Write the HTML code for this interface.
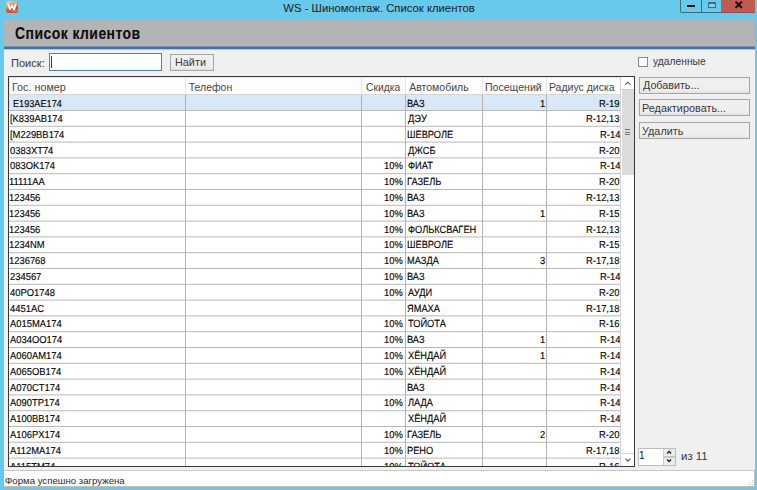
<!DOCTYPE html>
<html><head><meta charset="utf-8"><style>
html,body{margin:0;padding:0;}
body{width:757px;height:490px;overflow:hidden;position:relative;background:#68caea;font-family:"Liberation Sans", sans-serif;}
.b{position:absolute;}
.t{position:absolute;white-space:nowrap;font-family:"Liberation Sans", sans-serif;}
</style></head><body>
<div class="b" style="left:5.6px;top:1.3px;width:12px;height:12px;border-radius:2.5px;background:linear-gradient(160deg,#f3d6b0 0%,#dca672 30%,#d9925e 45%,#d3553f 58%,#d24b3b 100%);overflow:hidden"><svg style="position:absolute;left:0;top:0" width="12" height="12"><path d="M2 2.6 L4 8.4 L6 4.6 L8 8.4 L10 2.6" fill="none" stroke="#fff" stroke-width="1.7" stroke-linejoin="round"/><path d="M6 10 L11 9.6" stroke="#dca672" stroke-width="0.9"/></svg></div><div class="t" style="left:283.30px;top:1.00px;font-size:11.3px;line-height:14px;color:#1a1a1a;">WS - Шиномонтаж. Список клиентов</div><div class="b" style="left:680px;top:0px;width:22px;height:13px;box-sizing:border-box;border-left:1px solid #3a6c80;border-bottom:1px solid #3a6c80;border-right:1px solid #3a6c80;border-bottom-left-radius:2px;background:#68caea"></div><div class="b" style="left:702px;top:0px;width:19px;height:13px;box-sizing:border-box;border-bottom:1px solid #3a6c80;background:#68caea"></div><div class="b" style="left:687px;top:5px;width:8px;height:2px;background:#000"></div><div class="b" style="left:708px;top:2px;width:8px;height:5.5px;box-sizing:border-box;border:1px solid #3d6c86;border-top-width:2px;background:#86cfe6"></div><div class="b" style="left:721px;top:0px;width:34px;height:13px;background:#c35a50;border-bottom:1px solid #6e5a66;box-sizing:border-box"></div><svg class="b" style="left:734px;top:0px" width="10" height="10"><path d="M1.6 1.6 L7.9 7.9 M7.9 1.6 L1.6 7.9" stroke="#000" stroke-width="1.9"/></svg><div class="b" style="left:4px;top:19px;width:751px;height:468px;background:#f0f0f0"></div><div class="b" style="left:4px;top:19px;width:751px;height:27px;background:#b4b4b4"></div><div class="b" style="left:4px;top:46px;width:751px;height:1px;background:#7594b6"></div><div class="b" style="left:4px;top:47px;width:751px;height:2px;background:#3f72a9"></div><div class="b" style="left:4px;top:49px;width:751px;height:1px;background:#b6c7da"></div><div class="t" style="left:15.10px;top:24.40px;font-size:15.6px;line-height:19px;color:#0d0d0d;font-weight:bold;letter-spacing:0.5px;transform:scaleX(0.8957);transform-origin:0 0;-webkit-text-stroke:0.12px #0d0d0d;">Список клиентов</div><div class="t" style="left:10.99px;top:56.50px;font-size:11px;line-height:13px;color:#383838;transform:scaleX(1.0063);transform-origin:0 0;">Поиск:</div><div class="b" style="left:49px;top:53px;width:111px;height:16px;border:1px solid #4a84b9;background:#fff"></div><div class="b" style="left:51px;top:55.5px;width:1px;height:12px;background:#3a3a3a"></div><div class="b" style="left:170px;top:54px;width:42px;height:15px;border:1px solid #a5a5a5;background:linear-gradient(#f0f0f0 0%,#eeeeee 78%,#e3e3e3 100%)"></div><div class="t" style="left:174.91px;top:55.50px;font-size:11px;line-height:13px;color:#383838;transform:scaleX(0.9867);transform-origin:0 0;">Найти</div><div class="b" style="left:8px;top:76px;width:625px;height:389px;border:1px solid #383838;background:#fff"></div><div class="b" style="left:9px;top:77px;width:612px;height:17px;background:#fdfdfd"></div><div class="b" style="left:9px;top:94px;width:612px;height:1px;background:#d6d6d6"></div><div class="b" style="left:9px;top:77px;width:612px;height:1px;background:#e6e6e6"></div><div class="b" style="left:9px;top:77px;width:1px;height:17px;background:#e6e6e6"></div><div class="b" style="left:185px;top:77px;width:1px;height:17px;background:#e6e6e6"></div><div class="b" style="left:361px;top:77px;width:1px;height:17px;background:#e6e6e6"></div><div class="b" style="left:405px;top:77px;width:1px;height:17px;background:#e6e6e6"></div><div class="b" style="left:482px;top:77px;width:1px;height:17px;background:#e6e6e6"></div><div class="b" style="left:546px;top:77px;width:1px;height:17px;background:#e6e6e6"></div><div class="b" style="left:620px;top:77px;width:1px;height:17px;background:#e6e6e6"></div><div class="t" style="left:12.37px;top:80.50px;font-size:10.5px;line-height:13px;color:#474747;transform:scaleX(1.0255);transform-origin:0 0;">Гос. номер</div><div class="t" style="left:188.70px;top:80.50px;font-size:10.5px;line-height:13px;color:#474747;">Телефон</div><div class="t" style="left:365.70px;top:80.50px;font-size:10.5px;line-height:13px;color:#474747;transform:scaleX(0.9800);transform-origin:0 0;">Скидка</div><div class="t" style="left:409.20px;top:80.50px;font-size:10.5px;line-height:13px;color:#474747;">Автомобиль</div><div class="t" style="left:484.99px;top:80.50px;font-size:10.5px;line-height:13px;color:#474747;transform:scaleX(1.0055);transform-origin:0 0;">Посещений</div><div class="t" style="left:548.90px;top:80.50px;font-size:10.5px;line-height:13px;color:#474747;">Радиус диска</div><div class="b" style="left:0;top:95px;width:757px;height:371px;overflow:hidden"><div class="b" style="left:0;top:-95px;width:757px;height:490px"><div class="b" style="left:9px;top:95px;width:611px;height:15px;background:#d9e8f7"></div><div class="b" style="left:9px;top:110px;width:611px;height:1px;background:rgb(184,184,184)"></div><div class="t" style="left:12.64px;top:98.50px;font-size:10.1px;line-height:12px;color:#0a0a0a;transform:scaleX(0.9067);transform-origin:0 0;-webkit-text-stroke:0.15px #000;text-rendering:geometricPrecision;">E193AE174</div><div class="t" style="left:406.61px;top:98.50px;font-size:10.4px;line-height:12px;color:#0a0a0a;transform:scaleX(0.8921);transform-origin:0 0;-webkit-text-stroke:0.15px #000;text-rendering:geometricPrecision;">ВАЗ</div><div class="t" style="left:539.95px;top:98.50px;font-size:10.1px;line-height:12px;color:#0a0a0a;transform:scaleX(0.9304);transform-origin:0 0;-webkit-text-stroke:0.15px #000;text-rendering:geometricPrecision;">1</div><div class="t" style="left:598.63px;top:98.50px;font-size:10.1px;line-height:12px;color:#0a0a0a;transform:scaleX(0.9304);transform-origin:0 0;-webkit-text-stroke:0.15px #000;text-rendering:geometricPrecision;">R-19</div><div class="b" style="left:9px;top:125px;width:611px;height:1px;background:rgb(241,241,241)"></div><div class="b" style="left:9px;top:126px;width:611px;height:1px;background:rgb(198,198,198)"></div><div class="t" style="left:9.87px;top:113.50px;font-size:10.1px;line-height:12px;color:#0a0a0a;transform:scaleX(0.9304);transform-origin:0 0;-webkit-text-stroke:0.15px #000;text-rendering:geometricPrecision;">[K839AB174</div><div class="t" style="left:407.50px;top:113.50px;font-size:10.4px;line-height:12px;color:#0a0a0a;transform:scaleX(0.8921);transform-origin:0 0;-webkit-text-stroke:0.15px #000;text-rendering:geometricPrecision;">ДЭУ</div><div class="t" style="left:585.60px;top:113.50px;font-size:10.1px;line-height:12px;color:#0a0a0a;transform:scaleX(0.9304);transform-origin:0 0;-webkit-text-stroke:0.15px #000;text-rendering:geometricPrecision;">R-12,13</div><div class="b" style="left:9px;top:141px;width:611px;height:1px;background:rgb(227,227,227)"></div><div class="b" style="left:9px;top:142px;width:611px;height:1px;background:rgb(212,212,212)"></div><div class="t" style="left:9.87px;top:129.50px;font-size:10.1px;line-height:12px;color:#0a0a0a;transform:scaleX(0.9304);transform-origin:0 0;-webkit-text-stroke:0.15px #000;text-rendering:geometricPrecision;">[M229BB174</div><div class="t" style="left:406.61px;top:129.50px;font-size:10.4px;line-height:12px;color:#0a0a0a;transform:scaleX(0.8921);transform-origin:0 0;-webkit-text-stroke:0.15px #000;text-rendering:geometricPrecision;">ШЕВРОЛЕ</div><div class="t" style="left:599.56px;top:129.50px;font-size:10.1px;line-height:12px;color:#0a0a0a;transform:scaleX(0.9304);transform-origin:0 0;-webkit-text-stroke:0.15px #000;text-rendering:geometricPrecision;">R-14</div><div class="b" style="left:9px;top:157px;width:611px;height:1px;background:rgb(212,212,212)"></div><div class="b" style="left:9px;top:158px;width:611px;height:1px;background:rgb(227,227,227)"></div><div class="t" style="left:10.00px;top:145.50px;font-size:10.1px;line-height:12px;color:#0a0a0a;transform:scaleX(0.9304);transform-origin:0 0;-webkit-text-stroke:0.15px #000;text-rendering:geometricPrecision;">0383XT74</div><div class="t" style="left:407.50px;top:145.50px;font-size:10.4px;line-height:12px;color:#0a0a0a;transform:scaleX(0.8921);transform-origin:0 0;-webkit-text-stroke:0.15px #000;text-rendering:geometricPrecision;">ДЖСБ</div><div class="t" style="left:598.63px;top:145.50px;font-size:10.1px;line-height:12px;color:#0a0a0a;transform:scaleX(0.9304);transform-origin:0 0;-webkit-text-stroke:0.15px #000;text-rendering:geometricPrecision;">R-20</div><div class="b" style="left:9px;top:173px;width:611px;height:1px;background:rgb(198,198,198)"></div><div class="b" style="left:9px;top:174px;width:611px;height:1px;background:rgb(241,241,241)"></div><div class="t" style="left:10.00px;top:160.50px;font-size:10.1px;line-height:12px;color:#0a0a0a;transform:scaleX(0.9304);transform-origin:0 0;-webkit-text-stroke:0.15px #000;text-rendering:geometricPrecision;">083OK174</div><div class="t" style="left:383.89px;top:160.50px;font-size:10.1px;line-height:12px;color:#0a0a0a;transform:scaleX(0.9304);transform-origin:0 0;-webkit-text-stroke:0.15px #000;text-rendering:geometricPrecision;">10%</div><div class="t" style="left:407.50px;top:160.50px;font-size:10.4px;line-height:12px;color:#0a0a0a;transform:scaleX(0.8921);transform-origin:0 0;-webkit-text-stroke:0.15px #000;text-rendering:geometricPrecision;">ФИАТ</div><div class="t" style="left:599.56px;top:160.50px;font-size:10.1px;line-height:12px;color:#0a0a0a;transform:scaleX(0.9304);transform-origin:0 0;-webkit-text-stroke:0.15px #000;text-rendering:geometricPrecision;">R-14</div><div class="b" style="left:9px;top:189px;width:611px;height:1px;background:rgb(184,184,184)"></div><div class="t" style="left:9.07px;top:176.50px;font-size:10.1px;line-height:12px;color:#0a0a0a;transform:scaleX(0.9304);transform-origin:0 0;-webkit-text-stroke:0.15px #000;text-rendering:geometricPrecision;">11111AA</div><div class="t" style="left:383.89px;top:176.50px;font-size:10.1px;line-height:12px;color:#0a0a0a;transform:scaleX(0.9304);transform-origin:0 0;-webkit-text-stroke:0.15px #000;text-rendering:geometricPrecision;">10%</div><div class="t" style="left:406.61px;top:176.50px;font-size:10.4px;line-height:12px;color:#0a0a0a;transform:scaleX(0.8921);transform-origin:0 0;-webkit-text-stroke:0.15px #000;text-rendering:geometricPrecision;">ГАЗЕЛЬ</div><div class="t" style="left:598.63px;top:176.50px;font-size:10.1px;line-height:12px;color:#0a0a0a;transform:scaleX(0.9304);transform-origin:0 0;-webkit-text-stroke:0.15px #000;text-rendering:geometricPrecision;">R-20</div><div class="b" style="left:9px;top:204px;width:611px;height:1px;background:rgb(241,241,241)"></div><div class="b" style="left:9px;top:205px;width:611px;height:1px;background:rgb(198,198,198)"></div><div class="t" style="left:9.07px;top:192.50px;font-size:10.1px;line-height:12px;color:#0a0a0a;transform:scaleX(0.9304);transform-origin:0 0;-webkit-text-stroke:0.15px #000;text-rendering:geometricPrecision;">123456</div><div class="t" style="left:383.89px;top:192.50px;font-size:10.1px;line-height:12px;color:#0a0a0a;transform:scaleX(0.9304);transform-origin:0 0;-webkit-text-stroke:0.15px #000;text-rendering:geometricPrecision;">10%</div><div class="t" style="left:406.61px;top:192.50px;font-size:10.4px;line-height:12px;color:#0a0a0a;transform:scaleX(0.8921);transform-origin:0 0;-webkit-text-stroke:0.15px #000;text-rendering:geometricPrecision;">ВАЗ</div><div class="t" style="left:585.60px;top:192.50px;font-size:10.1px;line-height:12px;color:#0a0a0a;transform:scaleX(0.9304);transform-origin:0 0;-webkit-text-stroke:0.15px #000;text-rendering:geometricPrecision;">R-12,13</div><div class="b" style="left:9px;top:220px;width:611px;height:1px;background:rgb(227,227,227)"></div><div class="b" style="left:9px;top:221px;width:611px;height:1px;background:rgb(212,212,212)"></div><div class="t" style="left:9.07px;top:208.50px;font-size:10.1px;line-height:12px;color:#0a0a0a;transform:scaleX(0.9304);transform-origin:0 0;-webkit-text-stroke:0.15px #000;text-rendering:geometricPrecision;">123456</div><div class="t" style="left:383.89px;top:208.50px;font-size:10.1px;line-height:12px;color:#0a0a0a;transform:scaleX(0.9304);transform-origin:0 0;-webkit-text-stroke:0.15px #000;text-rendering:geometricPrecision;">10%</div><div class="t" style="left:406.61px;top:208.50px;font-size:10.4px;line-height:12px;color:#0a0a0a;transform:scaleX(0.8921);transform-origin:0 0;-webkit-text-stroke:0.15px #000;text-rendering:geometricPrecision;">ВАЗ</div><div class="t" style="left:539.95px;top:208.50px;font-size:10.1px;line-height:12px;color:#0a0a0a;transform:scaleX(0.9304);transform-origin:0 0;-webkit-text-stroke:0.15px #000;text-rendering:geometricPrecision;">1</div><div class="t" style="left:598.63px;top:208.50px;font-size:10.1px;line-height:12px;color:#0a0a0a;transform:scaleX(0.9304);transform-origin:0 0;-webkit-text-stroke:0.15px #000;text-rendering:geometricPrecision;">R-15</div><div class="b" style="left:9px;top:236px;width:611px;height:1px;background:rgb(212,212,212)"></div><div class="b" style="left:9px;top:237px;width:611px;height:1px;background:rgb(227,227,227)"></div><div class="t" style="left:9.07px;top:224.50px;font-size:10.1px;line-height:12px;color:#0a0a0a;transform:scaleX(0.9304);transform-origin:0 0;-webkit-text-stroke:0.15px #000;text-rendering:geometricPrecision;">123456</div><div class="t" style="left:383.89px;top:224.50px;font-size:10.1px;line-height:12px;color:#0a0a0a;transform:scaleX(0.9304);transform-origin:0 0;-webkit-text-stroke:0.15px #000;text-rendering:geometricPrecision;">10%</div><div class="t" style="left:407.50px;top:224.50px;font-size:10.4px;line-height:12px;color:#0a0a0a;transform:scaleX(0.8921);transform-origin:0 0;-webkit-text-stroke:0.15px #000;text-rendering:geometricPrecision;">ФОЛЬКСВАГЕН</div><div class="t" style="left:585.60px;top:224.50px;font-size:10.1px;line-height:12px;color:#0a0a0a;transform:scaleX(0.9304);transform-origin:0 0;-webkit-text-stroke:0.15px #000;text-rendering:geometricPrecision;">R-12,13</div><div class="b" style="left:9px;top:252px;width:611px;height:1px;background:rgb(198,198,198)"></div><div class="b" style="left:9px;top:253px;width:611px;height:1px;background:rgb(241,241,241)"></div><div class="t" style="left:9.07px;top:239.50px;font-size:10.1px;line-height:12px;color:#0a0a0a;transform:scaleX(0.9304);transform-origin:0 0;-webkit-text-stroke:0.15px #000;text-rendering:geometricPrecision;">1234NM</div><div class="t" style="left:383.89px;top:239.50px;font-size:10.1px;line-height:12px;color:#0a0a0a;transform:scaleX(0.9304);transform-origin:0 0;-webkit-text-stroke:0.15px #000;text-rendering:geometricPrecision;">10%</div><div class="t" style="left:406.61px;top:239.50px;font-size:10.4px;line-height:12px;color:#0a0a0a;transform:scaleX(0.8921);transform-origin:0 0;-webkit-text-stroke:0.15px #000;text-rendering:geometricPrecision;">ШЕВРОЛЕ</div><div class="t" style="left:598.63px;top:239.50px;font-size:10.1px;line-height:12px;color:#0a0a0a;transform:scaleX(0.9304);transform-origin:0 0;-webkit-text-stroke:0.15px #000;text-rendering:geometricPrecision;">R-15</div><div class="b" style="left:9px;top:268px;width:611px;height:1px;background:rgb(184,184,184)"></div><div class="t" style="left:9.07px;top:255.50px;font-size:10.1px;line-height:12px;color:#0a0a0a;transform:scaleX(0.9304);transform-origin:0 0;-webkit-text-stroke:0.15px #000;text-rendering:geometricPrecision;">1236768</div><div class="t" style="left:383.89px;top:255.50px;font-size:10.1px;line-height:12px;color:#0a0a0a;transform:scaleX(0.9304);transform-origin:0 0;-webkit-text-stroke:0.15px #000;text-rendering:geometricPrecision;">10%</div><div class="t" style="left:406.61px;top:255.50px;font-size:10.4px;line-height:12px;color:#0a0a0a;transform:scaleX(0.8921);transform-origin:0 0;-webkit-text-stroke:0.15px #000;text-rendering:geometricPrecision;">МАЗДА</div><div class="t" style="left:539.95px;top:255.50px;font-size:10.1px;line-height:12px;color:#0a0a0a;transform:scaleX(0.9304);transform-origin:0 0;-webkit-text-stroke:0.15px #000;text-rendering:geometricPrecision;">3</div><div class="t" style="left:585.60px;top:255.50px;font-size:10.1px;line-height:12px;color:#0a0a0a;transform:scaleX(0.9304);transform-origin:0 0;-webkit-text-stroke:0.15px #000;text-rendering:geometricPrecision;">R-17,18</div><div class="b" style="left:9px;top:283px;width:611px;height:1px;background:rgb(241,241,241)"></div><div class="b" style="left:9px;top:284px;width:611px;height:1px;background:rgb(198,198,198)"></div><div class="t" style="left:10.00px;top:271.50px;font-size:10.1px;line-height:12px;color:#0a0a0a;transform:scaleX(0.9304);transform-origin:0 0;-webkit-text-stroke:0.15px #000;text-rendering:geometricPrecision;">234567</div><div class="t" style="left:383.89px;top:271.50px;font-size:10.1px;line-height:12px;color:#0a0a0a;transform:scaleX(0.9304);transform-origin:0 0;-webkit-text-stroke:0.15px #000;text-rendering:geometricPrecision;">10%</div><div class="t" style="left:406.61px;top:271.50px;font-size:10.4px;line-height:12px;color:#0a0a0a;transform:scaleX(0.8921);transform-origin:0 0;-webkit-text-stroke:0.15px #000;text-rendering:geometricPrecision;">ВАЗ</div><div class="t" style="left:599.56px;top:271.50px;font-size:10.1px;line-height:12px;color:#0a0a0a;transform:scaleX(0.9304);transform-origin:0 0;-webkit-text-stroke:0.15px #000;text-rendering:geometricPrecision;">R-14</div><div class="b" style="left:9px;top:299px;width:611px;height:1px;background:rgb(227,227,227)"></div><div class="b" style="left:9px;top:300px;width:611px;height:1px;background:rgb(212,212,212)"></div><div class="t" style="left:10.00px;top:287.50px;font-size:10.1px;line-height:12px;color:#0a0a0a;transform:scaleX(0.9304);transform-origin:0 0;-webkit-text-stroke:0.15px #000;text-rendering:geometricPrecision;">40PO1748</div><div class="t" style="left:383.89px;top:287.50px;font-size:10.1px;line-height:12px;color:#0a0a0a;transform:scaleX(0.9304);transform-origin:0 0;-webkit-text-stroke:0.15px #000;text-rendering:geometricPrecision;">10%</div><div class="t" style="left:407.50px;top:287.50px;font-size:10.4px;line-height:12px;color:#0a0a0a;transform:scaleX(0.8921);transform-origin:0 0;-webkit-text-stroke:0.15px #000;text-rendering:geometricPrecision;">АУДИ</div><div class="t" style="left:598.63px;top:287.50px;font-size:10.1px;line-height:12px;color:#0a0a0a;transform:scaleX(0.9304);transform-origin:0 0;-webkit-text-stroke:0.15px #000;text-rendering:geometricPrecision;">R-20</div><div class="b" style="left:9px;top:315px;width:611px;height:1px;background:rgb(212,212,212)"></div><div class="b" style="left:9px;top:316px;width:611px;height:1px;background:rgb(227,227,227)"></div><div class="t" style="left:10.00px;top:303.50px;font-size:10.1px;line-height:12px;color:#0a0a0a;transform:scaleX(0.9304);transform-origin:0 0;-webkit-text-stroke:0.15px #000;text-rendering:geometricPrecision;">4451AC</div><div class="t" style="left:406.61px;top:303.50px;font-size:10.4px;line-height:12px;color:#0a0a0a;transform:scaleX(0.8921);transform-origin:0 0;-webkit-text-stroke:0.15px #000;text-rendering:geometricPrecision;">ЯМАХА</div><div class="t" style="left:585.60px;top:303.50px;font-size:10.1px;line-height:12px;color:#0a0a0a;transform:scaleX(0.9304);transform-origin:0 0;-webkit-text-stroke:0.15px #000;text-rendering:geometricPrecision;">R-17,18</div><div class="b" style="left:9px;top:331px;width:611px;height:1px;background:rgb(198,198,198)"></div><div class="b" style="left:9px;top:332px;width:611px;height:1px;background:rgb(241,241,241)"></div><div class="t" style="left:10.00px;top:318.50px;font-size:10.1px;line-height:12px;color:#0a0a0a;transform:scaleX(0.9304);transform-origin:0 0;-webkit-text-stroke:0.15px #000;text-rendering:geometricPrecision;">A015MA174</div><div class="t" style="left:383.89px;top:318.50px;font-size:10.1px;line-height:12px;color:#0a0a0a;transform:scaleX(0.9304);transform-origin:0 0;-webkit-text-stroke:0.15px #000;text-rendering:geometricPrecision;">10%</div><div class="t" style="left:407.50px;top:318.50px;font-size:10.4px;line-height:12px;color:#0a0a0a;transform:scaleX(0.8921);transform-origin:0 0;-webkit-text-stroke:0.15px #000;text-rendering:geometricPrecision;">ТОЙОТА</div><div class="t" style="left:598.63px;top:318.50px;font-size:10.1px;line-height:12px;color:#0a0a0a;transform:scaleX(0.9304);transform-origin:0 0;-webkit-text-stroke:0.15px #000;text-rendering:geometricPrecision;">R-16</div><div class="b" style="left:9px;top:347px;width:611px;height:1px;background:rgb(184,184,184)"></div><div class="t" style="left:10.00px;top:334.50px;font-size:10.1px;line-height:12px;color:#0a0a0a;transform:scaleX(0.9304);transform-origin:0 0;-webkit-text-stroke:0.15px #000;text-rendering:geometricPrecision;">A034OO174</div><div class="t" style="left:383.89px;top:334.50px;font-size:10.1px;line-height:12px;color:#0a0a0a;transform:scaleX(0.9304);transform-origin:0 0;-webkit-text-stroke:0.15px #000;text-rendering:geometricPrecision;">10%</div><div class="t" style="left:406.61px;top:334.50px;font-size:10.4px;line-height:12px;color:#0a0a0a;transform:scaleX(0.8921);transform-origin:0 0;-webkit-text-stroke:0.15px #000;text-rendering:geometricPrecision;">ВАЗ</div><div class="t" style="left:539.95px;top:334.50px;font-size:10.1px;line-height:12px;color:#0a0a0a;transform:scaleX(0.9304);transform-origin:0 0;-webkit-text-stroke:0.15px #000;text-rendering:geometricPrecision;">1</div><div class="t" style="left:599.56px;top:334.50px;font-size:10.1px;line-height:12px;color:#0a0a0a;transform:scaleX(0.9304);transform-origin:0 0;-webkit-text-stroke:0.15px #000;text-rendering:geometricPrecision;">R-14</div><div class="b" style="left:9px;top:362px;width:611px;height:1px;background:rgb(241,241,241)"></div><div class="b" style="left:9px;top:363px;width:611px;height:1px;background:rgb(198,198,198)"></div><div class="t" style="left:10.00px;top:350.50px;font-size:10.1px;line-height:12px;color:#0a0a0a;transform:scaleX(0.9304);transform-origin:0 0;-webkit-text-stroke:0.15px #000;text-rendering:geometricPrecision;">A060AM174</div><div class="t" style="left:383.89px;top:350.50px;font-size:10.1px;line-height:12px;color:#0a0a0a;transform:scaleX(0.9304);transform-origin:0 0;-webkit-text-stroke:0.15px #000;text-rendering:geometricPrecision;">10%</div><div class="t" style="left:407.50px;top:350.50px;font-size:10.4px;line-height:12px;color:#0a0a0a;transform:scaleX(0.8921);transform-origin:0 0;-webkit-text-stroke:0.15px #000;text-rendering:geometricPrecision;">ХЁНДАЙ</div><div class="t" style="left:539.95px;top:350.50px;font-size:10.1px;line-height:12px;color:#0a0a0a;transform:scaleX(0.9304);transform-origin:0 0;-webkit-text-stroke:0.15px #000;text-rendering:geometricPrecision;">1</div><div class="t" style="left:599.56px;top:350.50px;font-size:10.1px;line-height:12px;color:#0a0a0a;transform:scaleX(0.9304);transform-origin:0 0;-webkit-text-stroke:0.15px #000;text-rendering:geometricPrecision;">R-14</div><div class="b" style="left:9px;top:378px;width:611px;height:1px;background:rgb(227,227,227)"></div><div class="b" style="left:9px;top:379px;width:611px;height:1px;background:rgb(212,212,212)"></div><div class="t" style="left:10.00px;top:366.50px;font-size:10.1px;line-height:12px;color:#0a0a0a;transform:scaleX(0.9304);transform-origin:0 0;-webkit-text-stroke:0.15px #000;text-rendering:geometricPrecision;">A065OB174</div><div class="t" style="left:383.89px;top:366.50px;font-size:10.1px;line-height:12px;color:#0a0a0a;transform:scaleX(0.9304);transform-origin:0 0;-webkit-text-stroke:0.15px #000;text-rendering:geometricPrecision;">10%</div><div class="t" style="left:407.50px;top:366.50px;font-size:10.4px;line-height:12px;color:#0a0a0a;transform:scaleX(0.8921);transform-origin:0 0;-webkit-text-stroke:0.15px #000;text-rendering:geometricPrecision;">ХЁНДАЙ</div><div class="t" style="left:599.56px;top:366.50px;font-size:10.1px;line-height:12px;color:#0a0a0a;transform:scaleX(0.9304);transform-origin:0 0;-webkit-text-stroke:0.15px #000;text-rendering:geometricPrecision;">R-14</div><div class="b" style="left:9px;top:394px;width:611px;height:1px;background:rgb(212,212,212)"></div><div class="b" style="left:9px;top:395px;width:611px;height:1px;background:rgb(227,227,227)"></div><div class="t" style="left:10.00px;top:382.50px;font-size:10.1px;line-height:12px;color:#0a0a0a;transform:scaleX(0.9304);transform-origin:0 0;-webkit-text-stroke:0.15px #000;text-rendering:geometricPrecision;">A070CT174</div><div class="t" style="left:406.61px;top:382.50px;font-size:10.4px;line-height:12px;color:#0a0a0a;transform:scaleX(0.8921);transform-origin:0 0;-webkit-text-stroke:0.15px #000;text-rendering:geometricPrecision;">ВАЗ</div><div class="t" style="left:599.56px;top:382.50px;font-size:10.1px;line-height:12px;color:#0a0a0a;transform:scaleX(0.9304);transform-origin:0 0;-webkit-text-stroke:0.15px #000;text-rendering:geometricPrecision;">R-14</div><div class="b" style="left:9px;top:410px;width:611px;height:1px;background:rgb(198,198,198)"></div><div class="b" style="left:9px;top:411px;width:611px;height:1px;background:rgb(241,241,241)"></div><div class="t" style="left:10.00px;top:397.50px;font-size:10.1px;line-height:12px;color:#0a0a0a;transform:scaleX(0.9304);transform-origin:0 0;-webkit-text-stroke:0.15px #000;text-rendering:geometricPrecision;">A090TP174</div><div class="t" style="left:383.89px;top:397.50px;font-size:10.1px;line-height:12px;color:#0a0a0a;transform:scaleX(0.9304);transform-origin:0 0;-webkit-text-stroke:0.15px #000;text-rendering:geometricPrecision;">10%</div><div class="t" style="left:407.50px;top:397.50px;font-size:10.4px;line-height:12px;color:#0a0a0a;transform:scaleX(0.8921);transform-origin:0 0;-webkit-text-stroke:0.15px #000;text-rendering:geometricPrecision;">ЛАДА</div><div class="t" style="left:599.56px;top:397.50px;font-size:10.1px;line-height:12px;color:#0a0a0a;transform:scaleX(0.9304);transform-origin:0 0;-webkit-text-stroke:0.15px #000;text-rendering:geometricPrecision;">R-14</div><div class="b" style="left:9px;top:426px;width:611px;height:1px;background:rgb(184,184,184)"></div><div class="t" style="left:10.00px;top:413.50px;font-size:10.1px;line-height:12px;color:#0a0a0a;transform:scaleX(0.9304);transform-origin:0 0;-webkit-text-stroke:0.15px #000;text-rendering:geometricPrecision;">A100BB174</div><div class="t" style="left:407.50px;top:413.50px;font-size:10.4px;line-height:12px;color:#0a0a0a;transform:scaleX(0.8921);transform-origin:0 0;-webkit-text-stroke:0.15px #000;text-rendering:geometricPrecision;">ХЁНДАЙ</div><div class="t" style="left:599.56px;top:413.50px;font-size:10.1px;line-height:12px;color:#0a0a0a;transform:scaleX(0.9304);transform-origin:0 0;-webkit-text-stroke:0.15px #000;text-rendering:geometricPrecision;">R-14</div><div class="b" style="left:9px;top:441px;width:611px;height:1px;background:rgb(241,241,241)"></div><div class="b" style="left:9px;top:442px;width:611px;height:1px;background:rgb(198,198,198)"></div><div class="t" style="left:10.00px;top:429.50px;font-size:10.1px;line-height:12px;color:#0a0a0a;transform:scaleX(0.9304);transform-origin:0 0;-webkit-text-stroke:0.15px #000;text-rendering:geometricPrecision;">A106PX174</div><div class="t" style="left:383.89px;top:429.50px;font-size:10.1px;line-height:12px;color:#0a0a0a;transform:scaleX(0.9304);transform-origin:0 0;-webkit-text-stroke:0.15px #000;text-rendering:geometricPrecision;">10%</div><div class="t" style="left:406.61px;top:429.50px;font-size:10.4px;line-height:12px;color:#0a0a0a;transform:scaleX(0.8921);transform-origin:0 0;-webkit-text-stroke:0.15px #000;text-rendering:geometricPrecision;">ГАЗЕЛЬ</div><div class="t" style="left:539.95px;top:429.50px;font-size:10.1px;line-height:12px;color:#0a0a0a;transform:scaleX(0.9304);transform-origin:0 0;-webkit-text-stroke:0.15px #000;text-rendering:geometricPrecision;">2</div><div class="t" style="left:598.63px;top:429.50px;font-size:10.1px;line-height:12px;color:#0a0a0a;transform:scaleX(0.9304);transform-origin:0 0;-webkit-text-stroke:0.15px #000;text-rendering:geometricPrecision;">R-20</div><div class="b" style="left:9px;top:457px;width:611px;height:1px;background:rgb(227,227,227)"></div><div class="b" style="left:9px;top:458px;width:611px;height:1px;background:rgb(212,212,212)"></div><div class="t" style="left:10.00px;top:445.50px;font-size:10.1px;line-height:12px;color:#0a0a0a;transform:scaleX(0.9304);transform-origin:0 0;-webkit-text-stroke:0.15px #000;text-rendering:geometricPrecision;">A112MA174</div><div class="t" style="left:383.89px;top:445.50px;font-size:10.1px;line-height:12px;color:#0a0a0a;transform:scaleX(0.9304);transform-origin:0 0;-webkit-text-stroke:0.15px #000;text-rendering:geometricPrecision;">10%</div><div class="t" style="left:406.61px;top:445.50px;font-size:10.4px;line-height:12px;color:#0a0a0a;transform:scaleX(0.8921);transform-origin:0 0;-webkit-text-stroke:0.15px #000;text-rendering:geometricPrecision;">РЕНО</div><div class="t" style="left:585.60px;top:445.50px;font-size:10.1px;line-height:12px;color:#0a0a0a;transform:scaleX(0.9304);transform-origin:0 0;-webkit-text-stroke:0.15px #000;text-rendering:geometricPrecision;">R-17,18</div><div class="t" style="left:10.00px;top:461.50px;font-size:10.1px;line-height:12px;color:#0a0a0a;transform:scaleX(0.9304);transform-origin:0 0;-webkit-text-stroke:0.15px #000;text-rendering:geometricPrecision;">A115TM74</div><div class="t" style="left:383.89px;top:461.50px;font-size:10.1px;line-height:12px;color:#0a0a0a;transform:scaleX(0.9304);transform-origin:0 0;-webkit-text-stroke:0.15px #000;text-rendering:geometricPrecision;">10%</div><div class="t" style="left:407.50px;top:461.50px;font-size:10.4px;line-height:12px;color:#0a0a0a;transform:scaleX(0.8921);transform-origin:0 0;-webkit-text-stroke:0.15px #000;text-rendering:geometricPrecision;">ТОЙОТА</div><div class="t" style="left:598.63px;top:461.50px;font-size:10.1px;line-height:12px;color:#0a0a0a;transform:scaleX(0.9304);transform-origin:0 0;-webkit-text-stroke:0.15px #000;text-rendering:geometricPrecision;">R-16</div><div class="b" style="left:185px;top:95px;width:1px;height:371px;background:#b3b3b3"></div><div class="b" style="left:361px;top:95px;width:1px;height:371px;background:#b3b3b3"></div><div class="b" style="left:405px;top:95px;width:1px;height:371px;background:#b3b3b3"></div><div class="b" style="left:482px;top:95px;width:1px;height:371px;background:#b3b3b3"></div><div class="b" style="left:546px;top:95px;width:1px;height:371px;background:#b3b3b3"></div><div class="b" style="left:620px;top:95px;width:1px;height:371px;background:#b3b3b3"></div></div></div><div class="b" style="left:620px;top:77px;width:14px;height:389px;background:#fff;border-left:1px solid #d4d4d4;box-sizing:border-box"></div><div class="b" style="left:621px;top:77px;width:13px;height:12px;background:#fff"></div><div class="b" style="left:621px;top:89px;width:13px;height:1px;background:#d0d0d0"></div><div class="b" style="left:622px;top:90px;width:12px;height:85px;background:#dcdcdc"></div><div class="b" style="left:625px;top:129px;width:5px;height:1px;background:#777"></div><div class="b" style="left:625px;top:131.5px;width:5px;height:1px;background:#777"></div><div class="b" style="left:625px;top:134px;width:5px;height:1px;background:#777"></div><div class="b" style="left:621px;top:453px;width:13px;height:13px;background:#fff;border-top:1px solid #d8d8d8;box-sizing:border-box"></div><svg class="b" style="left:621px;top:77px" width="12" height="12"><path d="M4.3 7.7 L6.8 5.2 L9.3 7.7" fill="none" stroke="#555" stroke-width="1.1"/></svg><svg class="b" style="left:621px;top:453.5px" width="12" height="12"><path d="M4.3 4.6 L6.8 7.1 L9.3 4.6" fill="none" stroke="#555" stroke-width="1.1"/></svg><div class="b" style="left:638px;top:57px;width:8px;height:8px;border:1px solid #8c8c8c;background:#fff"></div><div class="t" style="left:652.70px;top:54.50px;font-size:11px;line-height:13px;color:#383838;transform:scaleX(0.9339);transform-origin:0 0;">удаленные</div><div class="b" style="left:639px;top:76.5px;width:109px;height:15px;border:1px solid #a5a5a5;background:linear-gradient(#f0f0f0 0%,#eeeeee 78%,#e3e3e3 100%)"></div><div class="t" style="left:643.40px;top:78.80px;font-size:11px;line-height:13px;color:#383838;transform:scaleX(0.9754);transform-origin:0 0;">Добавить...</div><div class="b" style="left:639px;top:99px;width:109px;height:15px;border:1px solid #a5a5a5;background:linear-gradient(#f0f0f0 0%,#eeeeee 78%,#e3e3e3 100%)"></div><div class="t" style="left:642.41px;top:101.60px;font-size:11px;line-height:13px;color:#383838;transform:scaleX(0.9880);transform-origin:0 0;">Редактировать...</div><div class="b" style="left:639px;top:122px;width:109px;height:15px;border:1px solid #a5a5a5;background:linear-gradient(#f0f0f0 0%,#eeeeee 78%,#e3e3e3 100%)"></div><div class="t" style="left:642.41px;top:124.50px;font-size:11px;line-height:13px;color:#383838;transform:scaleX(0.9854);transform-origin:0 0;">Удалить</div><div class="b" style="left:638px;top:448px;width:36px;height:16px;border:1px solid #bdbdbd;background:#fff"></div><div class="b" style="left:663px;top:449px;width:12px;height:16px;background:#ececec;border-left:1px solid #d0d0d0;box-sizing:border-box"></div><div class="b" style="left:663px;top:456px;width:12px;height:1.5px;background:#c6c6c6"></div><svg class="b" style="left:663px;top:448px" width="12" height="18"><path d="M4.1 5.6 L6.1 3.6 L8.1 5.6" fill="none" stroke="#222" stroke-width="1.4"/><path d="M4.1 11.4 L6.1 13.4 L8.1 11.4" fill="none" stroke="#222" stroke-width="1.4"/></svg><div class="t" style="left:639.00px;top:449.50px;font-size:10px;line-height:12px;color:#111;">1</div><div class="t" style="left:680.81px;top:449.50px;font-size:10.5px;line-height:13px;color:#383838;transform:scaleX(1.0870);transform-origin:0 0;">из 11</div><div class="b" style="left:4px;top:470px;width:751px;height:1px;background:#c8c8c8"></div><div class="b" style="left:4px;top:471px;width:750px;height:15px;background:#fff"></div><div class="b" style="left:4px;top:486px;width:751px;height:1px;background:#bdbdbd"></div><div class="b" style="left:754px;top:471px;width:1px;height:16px;background:#bdbdbd"></div><div class="b" style="left:752.0px;top:479.5px;width:1px;height:1px;background:#c4c4c4"></div><div class="b" style="left:749.8px;top:481.8px;width:1px;height:1px;background:#c4c4c4"></div><div class="b" style="left:752.0px;top:481.8px;width:1px;height:1px;background:#c4c4c4"></div><div class="b" style="left:747.7px;top:484.0px;width:1px;height:1px;background:#c4c4c4"></div><div class="b" style="left:749.8px;top:484.0px;width:1px;height:1px;background:#c4c4c4"></div><div class="b" style="left:752.0px;top:484.0px;width:1px;height:1px;background:#c4c4c4"></div><div class="t" style="left:4.60px;top:474.50px;font-size:9.7px;line-height:12px;color:#2a2a2a;transform:scaleX(0.9933);transform-origin:0 0;">Форма успешно загружена</div>
</body></html>
